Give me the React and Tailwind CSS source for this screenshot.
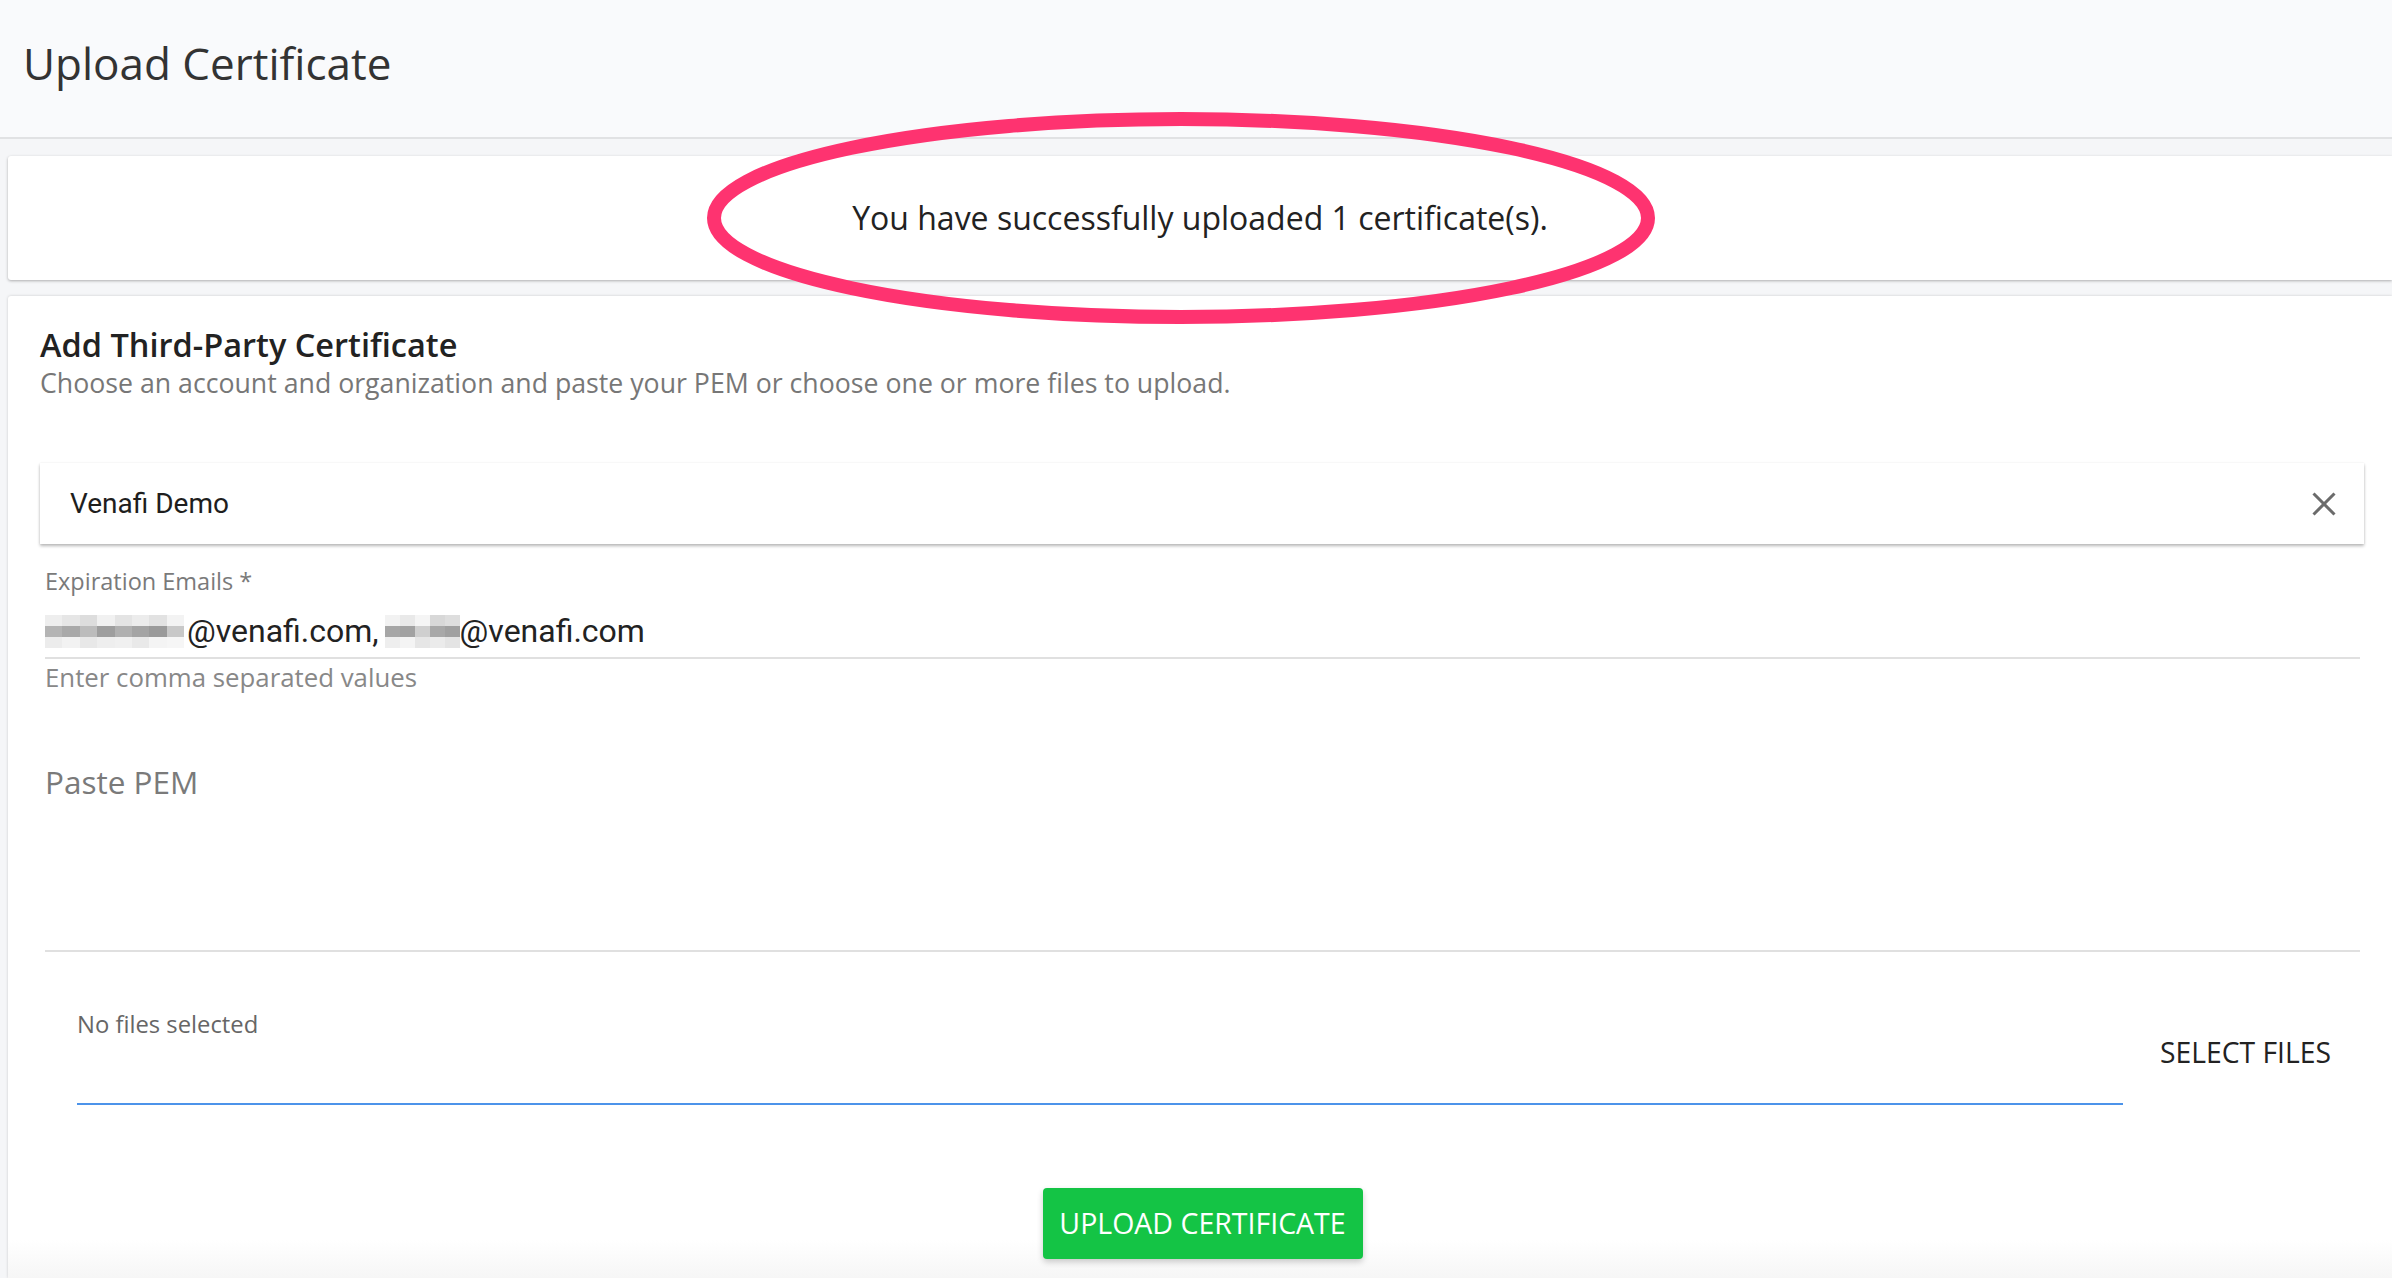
import React from "react";

const mosaicA = [
  ["#eeeeee", "#e6e6e6", "#dddddd", "#f1f1f1", "#e4e4e4", "#ececec", "#e2e2e2", "#f3f3f3"],
  ["#b4b4b4", "#a9a9a9", "#bcbcbc", "#9e9e9e", "#b0b0b0", "#a4a4a4", "#9a9a9a", "#c8c8c8"],
  ["#ececec", "#f2f2f2", "#e8e8e8", "#eeeeee", "#f0f0f0", "#e9e9e9", "#f4f4f4", "#f6f6f6"],
];

const mosaicB = [
  ["#f2f2f2", "#e9e9e9", "#f5f5f5", "#d8d8d8", "#dedede"],
  ["#a6a6a6", "#a2a2a2", "#cfcfcf", "#a8a8a8", "#a0a0a0"],
  ["#eeeeee", "#f4f4f4", "#e6e6e6", "#ebebeb", "#e4e4e4"],
];

const Mosaic = ({ cells, width }) => (
  <span
    className="inline-grid h-[33px] shrink-0"
    style={{
      width,
      gridTemplateColumns: `repeat(${cells[0].length}, 1fr)`,
    }}
  >
    {cells.flat().map((c, i) => (
      <span key={i} style={{ backgroundColor: c }} />
    ))}
  </span>
);

const App = () => {
  return (
    <div className="relative flex flex-col h-screen overflow-hidden bg-[#f5f6f8] font-['Open_Sans',sans-serif]">
      {/* Page header */}
      <header className="h-[139px] shrink-0 bg-[#f9fafc] border-b-2 border-[#e1e2e4] pl-[23px] pt-[33px]">
        <h1 className="text-[44px] leading-[60px] text-[#333333]">
          Upload Certificate
        </h1>
      </header>

      {/* Success message */}
      <div className="mt-[17px] ml-2 h-[124px] shrink-0 bg-white rounded-l-[3px] shadow-[0_1px_3px_rgba(0,0,0,0.3)] flex items-center justify-center">
        <p className="text-[32px] text-[#222222]">
          You have successfully uploaded 1 certificate(s).
        </p>
      </div>

      {/* Form card */}
      <section className="relative mt-4 ml-2 flex-1 bg-white rounded-tl-[3px] shadow-[0_0_3px_rgba(0,0,0,0.18)] pl-8 pr-[28px] pt-[29px]">
        <div className="absolute left-0 right-0 bottom-0 h-[38px] bg-linear-to-b from-white/0 to-[#f6f6f6] pointer-events-none" />

        <h3 className="relative text-[32.5px] leading-[40px] font-semibold text-[#222222]">
          Add Third-Party Certificate
        </h3>
        <p className="relative text-[26.7px] leading-[35px] text-[#777777]">
          Choose an account and organization and paste your PEM or choose one
          or more files to upload.
        </p>

        {/* Account select */}
        <div className="relative mt-[63px] h-[81px] flex items-center justify-between pl-[30px] pr-[28px] bg-white shadow-[0_2px_3px_rgba(0,0,0,0.28),0_0_2px_rgba(0,0,0,0.06)]">
          <span className="font-['Roboto',sans-serif] text-[28px] text-[#1e1e1e]">
            Venafi Demo
          </span>
          <svg width="24" height="24" viewBox="0 0 24 24">
            <path
              d="M1.5 1.5 L22.5 22.5 M22.5 1.5 L1.5 22.5"
              stroke="#6b6b6b"
              strokeWidth="3"
              fill="none"
            />
          </svg>
        </div>

        <div className="relative pl-[5px] pr-[4px]">
          {/* Emails */}
          <label className="block mt-[22px] text-[23.5px] leading-[30px] text-[#7a7a7a]">
            Expiration Emails *
          </label>
          <div className="mt-[15px] pb-[6px] border-b-2 border-[#e0e0e0] flex items-center font-['Roboto',sans-serif] text-[32px] leading-[40px] text-[#222222]">
            <Mosaic cells={mosaicA} width={139} />
            <span className="ml-[3px]">@venafi.com,</span>
            <span className="ml-[6px] flex">
              <Mosaic cells={mosaicB} width={75} />
            </span>
            <span>@venafi.com</span>
          </div>
          <p className="mt-[3px] text-[25.8px] leading-[30px] text-[#888888]">
            Enter comma separated values
          </p>

          {/* Paste PEM */}
          <div className="mt-[70px] h-[190px] border-b-2 border-[#e0e0e0]">
            <p className="text-[31.5px] leading-[40px] text-[#7a7a7a]">
              Paste PEM
            </p>
          </div>

          {/* Files */}
          <div className="mt-[57px] flex">
            <div className="ml-8 flex-1 h-[96px] border-b-2 border-[#4c93ea]">
              <p className="text-[23.8px] leading-[30px] text-[#666666]">
                No files selected
              </p>
            </div>
            <button className="w-[237px] pl-[8px] mt-[25px] self-start text-[28.3px] leading-[36px] text-[#222222] uppercase">
              Select files
            </button>
          </div>

          <div className="mt-[83px] flex justify-center">
            <button className="w-[320px] h-[71px] bg-[#14c445] rounded-[4px] shadow-[0_3px_6px_rgba(0,0,0,0.2)] text-white text-[28.5px] uppercase">
              Upload certificate
            </button>
          </div>
        </div>
      </section>

      {/* Annotation ring */}
      <svg
        className="absolute left-0 top-0 pointer-events-none"
        width="2392"
        height="400"
      >
        <ellipse
          cx="1181"
          cy="218"
          rx="467"
          ry="99"
          fill="none"
          stroke="#fe3370"
          strokeWidth="14"
        />
      </svg>
    </div>
  );
};

export default App;
